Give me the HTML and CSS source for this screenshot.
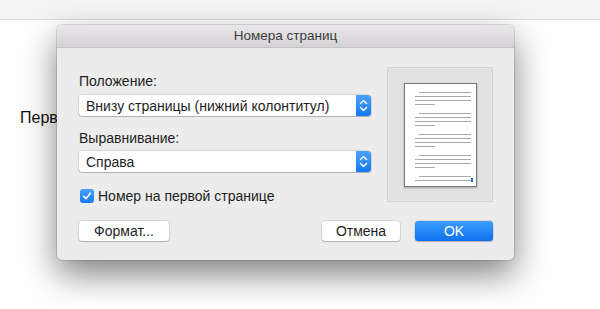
FILE: index.html
```
<!DOCTYPE html>
<html>
    <head>
        <meta charset="UTF-8">
        <title>Номера страниц</title>
        <link rel="stylesheet" href="styles.css">
    </head>
    <body>
        <div class="toolbar"></div>
        <div class="doc">
            <p class="doc-text">Перв</p>
        </div>
        <div class="dialog">
            <div class="title">Номера страниц</div>
            <div class="dialog-body">
                <div class="top">
                    <div class="fields">
                        <div class="label first">Положение:</div>
                        <div class="select">
                            <span class="select-text">Внизу страницы (нижний колонтитул)</span>
                            <span class="stepper">
                                <svg width="15" height="21" viewBox="0 0 15 21"><polyline points="4.5,8.5 7.5,5.5 10.5,8.5" /><polyline points="4.5,12.5 7.5,15.5 10.5,12.5" /></svg>
                            </span>
                        </div>
                        <div class="label second">Выравнивание:</div>
                        <div class="select">
                            <span class="select-text">Справа</span>
                            <span class="stepper">
                                <svg width="15" height="21" viewBox="0 0 15 21"><polyline points="4.5,8.5 7.5,5.5 10.5,8.5" /><polyline points="4.5,12.5 7.5,15.5 10.5,12.5" /></svg>
                            </span>
                        </div>
                        <div class="check-row">
                            <span class="check">
                                <svg width="14" height="14" viewBox="0 0 14 14"><polyline points="3.5,7.2 6,9.8 10.5,4" /></svg>
                            </span>
                            <span>Номер на первой странице</span>
                        </div>
                    </div>
                    <div class="preview">
                        <div class="page">
                            <div class="para"><i class="ln indent"></i><i class="ln"></i><i class="ln"></i><i class="ln short"></i></div>
                            <div class="para"><i class="ln indent"></i><i class="ln"></i><i class="ln"></i><i class="ln short"></i></div>
                            <div class="para"><i class="ln indent"></i><i class="ln"></i><i class="ln"></i><i class="ln short"></i></div>
                            <div class="para"><i class="ln indent"></i><i class="ln"></i><i class="ln"></i><i class="ln short"></i></div>
                            <div class="para"><i class="ln indent"></i><i class="ln"></i></div>
                            <span class="num"></span>
                        </div>
                    </div>
                </div>
                <div class="footer">
                    <button class="btn">Формат...</button>
                    <div class="right-btns">
                        <button class="btn cancel">Отмена</button>
                        <button class="btn ok">OK</button>
                    </div>
                </div>
            </div>
        </div>
    </body>
</html>
```
FILE: styles.css
```
body {
    margin: 0;
    background: white;
    font-family: "Liberation Sans", Arial, sans-serif;
    width: 600px;
    height: 309px;
    overflow: hidden;
}
.toolbar {
    height: 19px;
    background: #f5f5f5;
    border-bottom: 1px solid #dcdcdc;
}
.doc {
    padding: 89px 0 0 20px;
}
.doc-text {
    margin: 0;
    font-size: 16px;
    color: #111;
}
.dialog {
    position: absolute;
    left: 57px;
    top: 25px;
    width: 457px;
    height: 235px;
    background: #ececec;
    border-radius: 5px;
    box-shadow: 0 0 0 1px rgba(0, 0, 0, 0.12), 0 14px 34px rgba(0, 0, 0, 0.5);
    overflow: hidden;
    font-size: 14px;
    color: #1e1e1e;
}
.title {
    height: 22px;
    line-height: 22px;
    font-size: 13.5px;
    text-align: center;
    color: #3c3c3c;
    background: linear-gradient(#e9e7e9, #d4d2d4);
    border-bottom: 1px solid #c4c2c4;
}
.dialog-body {
    padding: 19px 21px 0 22px;
}
.top {
    display: flex;
    gap: 16px;
}
.fields {
    width: 292px;
}
.label {
    line-height: 16px;
}
.label.first {
    margin-top: 6px;
}
.label.second {
    margin-top: 14px;
}
.select {
    margin-top: 6px;
    height: 21px;
    display: flex;
    align-items: center;
    background: white;
    border-radius: 3px;
    box-shadow: 0 0 0 0.5px rgba(0, 0, 0, 0.18), 0 1px 1px rgba(0, 0, 0, 0.18);
}
.label.second + .select {
    margin-top: 5px;
}
.select-text {
    flex: 1;
    padding-left: 7px;
}
.stepper {
    width: 15px;
    height: 21px;
    border-radius: 0 3px 3px 0;
    background: linear-gradient(#4aa3ff, #1577f2);
}
.stepper svg, .check svg {
    display: block;
    fill: none;
    stroke: white;
    stroke-width: 1.5;
    stroke-linecap: round;
    stroke-linejoin: round;
}
.check-row {
    margin-top: 16px;
    display: flex;
    align-items: center;
    gap: 4px;
    height: 16px;
    padding-left: 1px;
}
.check {
    width: 14px;
    height: 14px;
    border-radius: 3px;
    background: linear-gradient(#48a2ff, #1677f2);
}
.preview {
    width: 104px;
    height: 133px;
    background: #e2e2e2;
    border: 1px solid #d2d2d2;
    display: flex;
    justify-content: center;
    align-items: center;
}
.page {
    position: relative;
    width: 73px;
    height: 104px;
    background: white;
    border: 1px solid #777;
    box-shadow: 0 1px 2px rgba(0, 0, 0, 0.3);
    padding: 8px 6px 0 10px;
    box-sizing: border-box;
}
.para {
    margin-bottom: 8px;
}
.ln {
    display: block;
    height: 1px;
    background: #aaa;
    margin-bottom: 3px;
    width: 56px;
}
.ln.indent {
    margin-left: 4px;
    width: 52px;
}
.ln.short {
    width: 20px;
}
.num {
    position: absolute;
    right: 3px;
    bottom: 4px;
    width: 2px;
    height: 4px;
    background: #2a6fd0;
}
.footer {
    margin-top: 17px;
    display: flex;
    justify-content: space-between;
}
.right-btns {
    display: flex;
    gap: 15px;
}
.btn {
    font-family: inherit;
    font-size: 14px;
    line-height: 19px;
    color: #1e1e1e;
    height: 20px;
    padding: 0;
    width: 90px;
    background: white;
    border: none;
    border-radius: 3px;
    box-shadow: 0 0 0 0.5px rgba(0, 0, 0, 0.18), 0 1px 1px rgba(0, 0, 0, 0.18);
}
.btn.cancel, .btn.ok {
    width: 78px;
}
.btn.ok {
    color: white;
    background: linear-gradient(#3d9cff, #0f72ee);
}
```
